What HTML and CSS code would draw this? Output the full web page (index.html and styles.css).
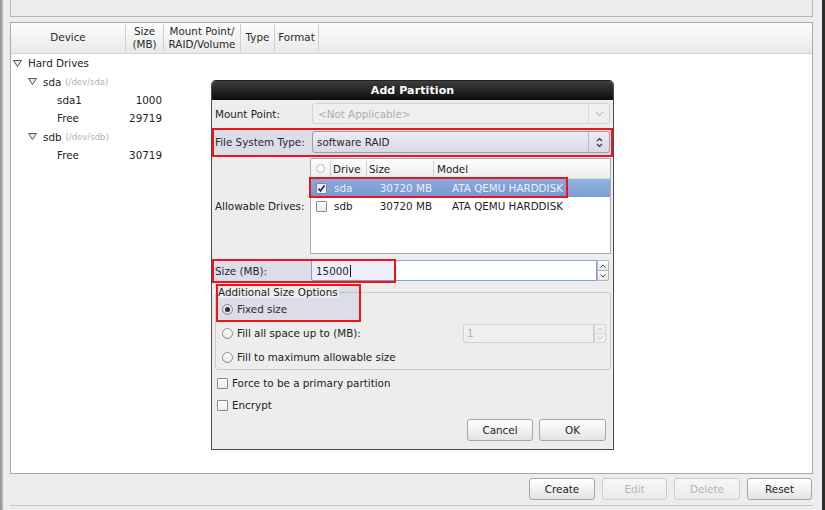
FILE: index.html
```html
<!DOCTYPE html>
<html>
<head>
<meta charset="utf-8">
<link rel="stylesheet" href="styles.css">
</head>
<body>
<div class="screen">
  <div class="edge-left"></div>
  <div class="main">
    <div class="top-panel"></div>
    <div class="tree">
      <div class="tree-head">
        <div class="th c-device">Device</div>
        <div class="th c-size">Size<br>(MB)</div>
        <div class="th c-mount">Mount Point/<br>RAID/Volume</div>
        <div class="th c-type">Type</div>
        <div class="th c-format">Format</div>
      </div>
      <div class="tree-body">
        <div class="trow">
          <div class="tname lvl0"><svg class="exp" width="9" height="7" viewBox="0 0 9 7"><path d="M0.5 0.5 H8.5 L4.5 6.5 Z" fill="#e8e8e8" stroke="#555" stroke-width="1"/></svg>Hard Drives</div>
        </div>
        <div class="trow">
          <div class="tname lvl1"><svg class="exp" width="9" height="7" viewBox="0 0 9 7"><path d="M0.5 0.5 H8.5 L4.5 6.5 Z" fill="#e8e8e8" stroke="#555" stroke-width="1"/></svg>sda <span class="dev">(/dev/sda)</span></div>
        </div>
        <div class="trow">
          <div class="tname lvl2">sda1</div>
          <div class="tsize">1000</div>
        </div>
        <div class="trow">
          <div class="tname lvl2">Free</div>
          <div class="tsize">29719</div>
        </div>
        <div class="trow">
          <div class="tname lvl1"><svg class="exp" width="9" height="7" viewBox="0 0 9 7"><path d="M0.5 0.5 H8.5 L4.5 6.5 Z" fill="#e8e8e8" stroke="#555" stroke-width="1"/></svg>sdb <span class="dev">(/dev/sdb)</span></div>
        </div>
        <div class="trow">
          <div class="tname lvl2">Free</div>
          <div class="tsize">30719</div>
        </div>
      </div>
    </div>
    <div class="actions">
      <div class="btn b-create">Create</div>
      <div class="btn disabled b-edit">Edit</div>
      <div class="btn disabled b-delete">Delete</div>
      <div class="btn b-reset">Reset</div>
    </div>
    <div class="bottom-line"></div>
  </div>
  <div class="edge-right"></div>
</div>

<div class="dialog">
  <div class="dlg-title">Add Partition</div>
  <div class="dlg-body">
    <div class="frow r-mount">
      <div class="flabel">Mount Point:</div>
      <div class="combo disabled">
        <div class="ctext">&lt;Not Applicable&gt;</div>
        <div class="carrow"><svg width="9" height="6" viewBox="0 0 9 6"><path d="M1 1 L4.5 4.5 L8 1" fill="none" stroke="#c4c4c4" stroke-width="1.2"/></svg></div>
      </div>
    </div>
    <div class="frow r-fs">
      <div class="flabel">File System Type:</div>
      <div class="combo">
        <div class="ctext fs">software RAID</div>
        <div class="carrow"><svg width="7" height="11" viewBox="0 0 7 11"><path d="M1 4 L3.5 1.5 L6 4 M1 7 L3.5 9.5 L6 7" fill="none" stroke="#333" stroke-width="1.2"/></svg></div>
      </div>
    </div>
    <div class="frow r-drives">
      <div class="flabel">Allowable Drives:</div>
      <div class="list">
        <div class="lhead">
          <div class="lc l-chk"><span class="hcircle"></span></div>
          <div class="lc l-drive">Drive</div>
          <div class="lc l-size">Size</div>
          <div class="lc l-model">Model</div>
        </div>
        <div class="lrow selected">
          <div class="lc l-chk"><span class="cbox checked"><svg width="9" height="9" viewBox="0 0 9 9"><path d="M1.5 4.5 L3.5 7 L7.5 1.5" fill="none" stroke="#222" stroke-width="1.6"/></svg></span></div>
          <div class="lc l-drive">sda</div>
          <div class="lc l-size">30720 MB</div>
          <div class="lc l-model">ATA QEMU HARDDISK</div>
        </div>
        <div class="lrow">
          <div class="lc l-chk"><span class="cbox"></span></div>
          <div class="lc l-drive">sdb</div>
          <div class="lc l-size">30720 MB</div>
          <div class="lc l-model">ATA QEMU HARDDISK</div>
        </div>
      </div>
    </div>
    <div class="frow r-size">
      <div class="flabel">Size (MB):</div>
      <div class="spin">
        <div class="entry focus">15000<span class="caret"></span></div>
        <div class="spinbtns">
          <div class="sb"><svg width="6" height="4" viewBox="0 0 6 4"><path d="M0.5 3.5 L3 1 L5.5 3.5" fill="none" stroke="#444" stroke-width="1"/></svg></div>
          <div class="sb"><svg width="6" height="4" viewBox="0 0 6 4"><path d="M0.5 0.5 L3 3 L5.5 0.5" fill="none" stroke="#444" stroke-width="1"/></svg></div>
        </div>
      </div>
    </div>
    <div class="opts">
      <div class="legend">Additional Size Options</div>
      <div class="frame">
        <div class="rrow"><span class="radio on"></span>Fixed size</div>
        <div class="rrow"><span class="radio"></span>Fill all space up to (MB):
          <div class="spin small">
            <div class="entry dis">1</div>
            <div class="spinbtns dis">
              <div class="sb"><svg width="6" height="4" viewBox="0 0 6 4"><path d="M0.5 3.5 L3 1 L5.5 3.5" fill="none" stroke="#c4c4c4" stroke-width="1"/></svg></div>
              <div class="sb"><svg width="6" height="4" viewBox="0 0 6 4"><path d="M0.5 0.5 L3 3 L5.5 0.5" fill="none" stroke="#c4c4c4" stroke-width="1"/></svg></div>
            </div>
          </div>
        </div>
        <div class="rrow"><span class="radio"></span>Fill to maximum allowable size</div>
      </div>
    </div>
    <div class="crow"><span class="cbox"></span>Force to be a primary partition</div>
    <div class="crow"><span class="cbox"></span>Encrypt</div>
    <div class="dlg-actions">
      <div class="btn cancel">Cancel</div>
      <div class="btn ok">OK</div>
    </div>
  </div>
</div>

<div class="mark m-fs"></div>
<div class="mark m-sda"></div>
<div class="mark m-size"></div>
<div class="mark m-opts"></div>
</body>
</html>
```
FILE: styles.css
```css
* { box-sizing: border-box; }
html, body { margin: 0; padding: 0; }
body {
  width: 825px;
  height: 510px;
  overflow: hidden;
  position: relative;
  background: #ededed;
  font-family: "DejaVu Sans", "Noto Sans", sans-serif;
  font-size: 10.35px;
  color: #222;
}
.screen { display: flex; height: 510px; }
.edge-left { width: 3px; background: linear-gradient(90deg, #8c8c8c, #bdbdbd); }
.edge-right { width: 3px; background: #2f2c24; }
.main { flex: 1; padding: 0 9px 0 7px; display: flex; flex-direction: column; }

.top-panel { height: 17px; border: 1px solid #b7b7b7; border-top: none; margin-bottom: 5px; flex: none; }

.tree { height: 452px; flex: none; border: 1px solid #a9a9a9; background: #fff; display: flex; flex-direction: column; }
.tree-head {
  height: 31px;
  flex: none;
  display: flex;
  padding: 1px 0 2px;
  background: linear-gradient(#fdfdfd, #e9e9e9);
  border-bottom: 1px solid #d2d2d2;
}
.th {
  display: flex; align-items: center; justify-content: center; text-align: center;
  line-height: 13px; border-right: 1px solid #cfcfcf; color: #2a2a2a;
}
.c-device { width: 115px; }
.c-size { width: 38px; }
.c-mount { width: 77px; }
.c-type { width: 34px; }
.c-format { width: 44px; }

.trow { height: 18.4px; display: flex; align-items: center; }
.tname { width: 115px; display: flex; align-items: center; white-space: nowrap; }
.tname .exp { margin-right: 6px; flex: none; }
.lvl0 { padding-left: 2px; }
.lvl1 { padding-left: 17px; }
.lvl2 { padding-left: 46px; }
.dev { font-size: 8.5px; color: #b0b0b0; margin-left: 4px; }
.tsize { width: 36px; text-align: right; }

.actions { display: flex; justify-content: flex-end; gap: 7px; margin-top: 4px; padding-right: 1px; flex: none; }
.btn {
  height: 22px; width: 66px;
  border: 1px solid #a6a6a6; border-radius: 3px;
  background: linear-gradient(#ffffff, #e4e4e4);
  display: flex; align-items: center; justify-content: center;
  color: #222;
}
.actions .b-edit, .actions .b-reset { width: 65px; }
.btn.disabled { color: #b6b6b6; border-color: #cdcdcd; background: linear-gradient(#f6f6f6, #ebebeb); }
.bottom-line { margin-top: 5px; border-top: 1px solid #c6c6c6; flex: none; }

/* dialog */
.dialog {
  position: absolute; left: 211px; top: 80px; width: 403px;
  border: 1px solid #4c4c4c; border-top-color: #222;
  border-radius: 5px 5px 0 0;
  background: #ededed;
}
.dlg-title {
  height: 19px;
  background: linear-gradient(#3e3e3e, #0c0c0c);
  color: #fff; font-weight: bold; font-size: 11px;
  display: flex; align-items: center; justify-content: center;
  border-radius: 4px 4px 0 0;
  letter-spacing: 0.1px;
}
.dlg-body { padding: 3px 3px 8px 3px; }
.frow { display: flex; align-items: center; }
.flabel { width: 97px; flex: none; white-space: nowrap; }
.r-mount { height: 21px; }
.r-fs { height: 22px; margin-top: 7px; }
.r-drives { height: 96px; margin-top: 5px; }
.r-size { height: 21px; margin-top: 6px; }

.combo {
  flex: 1; height: 100%;
  border: 1px solid #a3a3a3; border-radius: 3px;
  background: linear-gradient(#fdfdfd, #e8e8e8);
  display: flex; align-items: center;
}
.combo .ctext { flex: 1; padding-left: 5px; }
.combo .ctext.fs { padding-left: 4px; }
.combo .carrow { width: 21px; height: 100%; border-left: 1px solid #c6c6c6; display: flex; align-items: center; justify-content: center; }
.combo.disabled { border-color: #d3d3d3; background: #efefef; color: #acacac; }
.combo.disabled .carrow { border-left-color: #dadada; }

.list {
  flex: 1; height: 100%; margin-left: -2px; margin-right: -1px;
  border: 1px solid #acacac; background: #fff;
}
.lhead {
  height: 20px; display: flex; padding: 2px 0;
  background: linear-gradient(#fdfdfd, #eeeeee);
  border-bottom: 1px solid #d8d8d8;
}
.lrow { height: 18px; display: flex; align-items: center; }
.lc { display: flex; align-items: center; height: 100%; white-space: nowrap; }
.lhead .lc { border-right: 1px solid #d0d0d0; }
.lhead .l-model { border-right: none; }
.l-chk { width: 20px; justify-content: center; }
.l-drive { width: 36px; padding-left: 2px; }
.l-size { width: 67px; padding-left: 2px; }
.l-model { flex: 1; padding-left: 3px; }
.lrow .l-drive { padding-left: 3px; }
.lrow .l-size { justify-content: flex-end; padding-right: 2px; padding-left: 0; }
.lrow .l-model { padding-left: 18px; }
.hcircle { width: 9px; height: 9px; border: 1px solid #bdbdbd; border-radius: 50%; background: #fafafa; }
.lrow.selected { background: linear-gradient(#92b3e0, #7a9fd3); color: #fff; }

.cbox {
  width: 11px; height: 11px; flex: none;
  border: 1px solid #8b8b8b; border-radius: 1px;
  background: linear-gradient(#ffffff, #ececec);
  display: flex; align-items: center; justify-content: center;
}
.cbox.checked { background: #fff; }

.spin { flex: 1; height: 100%; display: flex; margin-left: -1px; margin-right: 1px; }
.entry {
  flex: 1; height: 100%;
  border: 1px solid #a8a8a8; border-radius: 2px 0 0 2px;
  background: #fff;
  padding-left: 4px;
  display: flex; align-items: center;
}
.entry.focus { border-color: #7ea2da; }
.caret { display: inline-block; width: 1px; height: 12px; background: #111; margin-left: 1px; }
.spinbtns { width: 12px; display: flex; flex-direction: column; margin-left: 0; }
.sb {
  flex: 1;
  border: 1px solid #b2b2b2;
  background: linear-gradient(#fdfdfd, #e6e6e6);
  display: flex; align-items: center; justify-content: center;
}
.sb:first-child { border-radius: 0 2px 0 0; border-bottom: none; }
.sb:last-child { border-radius: 0 0 2px 0; }

.opts { margin-top: 5px; }
.legend {
  display: inline-block; position: relative; z-index: 1;
  height: 12px; line-height: 12px;
  margin-left: 3px; padding-right: 1px;
  background: #ededed;
}
.frame {
  margin-top: -6px;
  height: 78px; width: 396px;
  border: 1px solid #cbcbcb; border-radius: 3px;
  padding-top: 4px;
}
.rrow { height: 24px; display: flex; align-items: center; padding-left: 6px; white-space: nowrap; }
.radio {
  width: 11px; height: 11px; flex: none; margin-right: 4px;
  border: 1px solid #8d8d8d; border-radius: 50%;
  background: linear-gradient(#ffffff, #e8e8e8);
  display: flex; align-items: center; justify-content: center;
}
.radio.on::after { content: ""; width: 5px; height: 5px; border-radius: 50%; background: #2a2a2a; }
.spin.small { flex: none; width: 143px; height: 19px; margin-left: auto; margin-right: 4px; }
.entry.dis { border-color: #cfcfcf; background: #efefef; color: #b2b2b2; padding-left: 3px; }
.spinbtns.dis .sb { border-color: #d4d4d4; background: #f0f0f0; }

.crow { height: 22px; display: flex; align-items: center; padding-left: 2px; white-space: nowrap; }
.crow .cbox { margin-right: 4px; }
.opts + .crow { margin-top: 2px; }

.dlg-actions { display: flex; justify-content: flex-end; gap: 6px; margin-top: 3px; padding-right: 4px; }
.dlg-actions .cancel { width: 66px; }
.dlg-actions .ok { width: 67px; }

/* annotation highlights */
.mark {
  position: absolute;
  border: 2px solid #ee1418;
  background: rgba(90, 90, 210, 0.1);
}
.m-fs { left: 212px; top: 128px; width: 401px; height: 29px; }
.m-sda { left: 309px; top: 177px; width: 259px; height: 21px; }
.m-size { left: 212px; top: 259px; width: 184px; height: 24px; }
.m-opts { left: 216px; top: 284px; width: 145px; height: 38px; }
```
